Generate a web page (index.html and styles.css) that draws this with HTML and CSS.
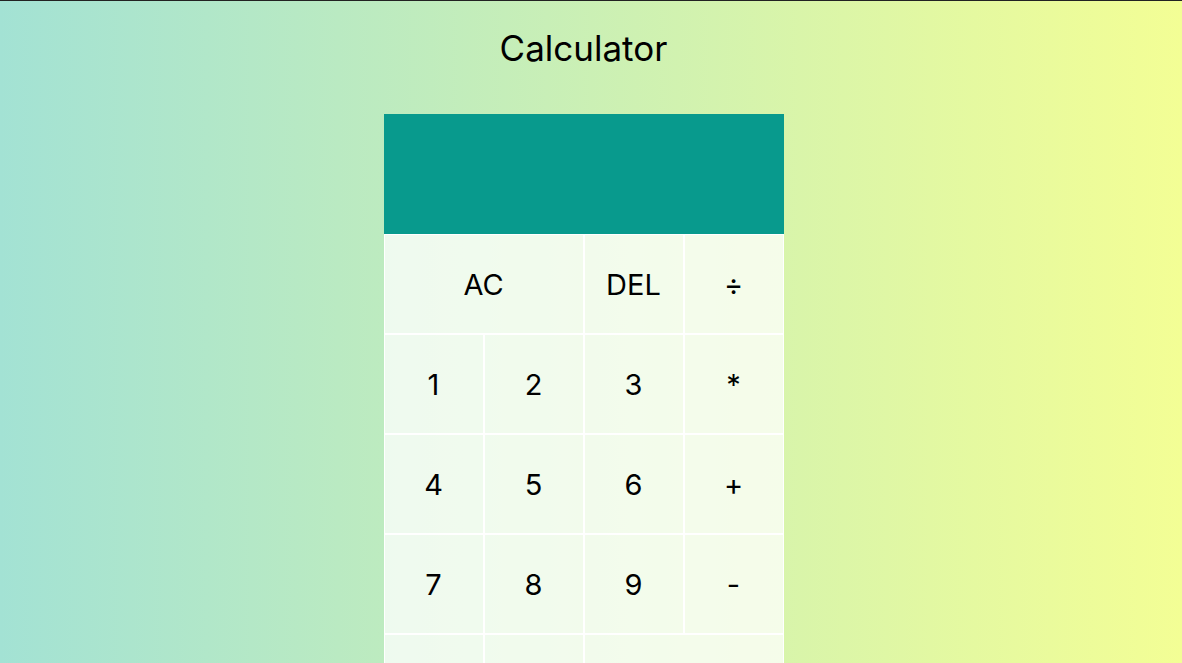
FILE: index.html
```html
<!DOCTYPE html>
<html lang="en">
<head>
<meta charset="utf-8">
<title>Calculator</title>
<link rel="stylesheet" href="styles.css">
</head>
<body>
<h1 class="title">Calculator</h1>
<div class="calculator-grid">
  <div class="output"></div>
  <button class="span-two">AC</button>
  <button>DEL</button>
  <button>÷</button>
  <button>1</button>
  <button>2</button>
  <button>3</button>
  <button>*</button>
  <button>4</button>
  <button>5</button>
  <button>6</button>
  <button>+</button>
  <button>7</button>
  <button>8</button>
  <button>9</button>
  <button>-</button>
  <button>.</button>
  <button>0</button>
  <button class="span-two">=</button>
</div>
</body>
</html>
```
FILE: styles.css
```css
*, *::before, *::after {
  box-sizing: border-box;
}
html, body {
  margin: 0;
  padding: 0;
}
body {
  min-height: 100vh;
  padding-right: 15px;
  border-top: 1px solid #222;
  background: linear-gradient(to right, #a3e2d4, #f3fe95);
  font-family: "Inter", "Lato", sans-serif;
  color: #000;
}
.title {
  margin: 0;
  padding-top: 27px;
  height: 113px;
  text-align: center;
  font-size: 35px;
  font-weight: 400;
  line-height: 40px;
}
.calculator-grid {
  display: grid;
  justify-content: center;
  grid-template-columns: repeat(4, 100px);
  grid-template-rows: 120px repeat(5, 100px);
}
.output {
  grid-column: 1 / -1;
  background-color: #089a8d;
}
.calculator-grid > button {
  font-family: inherit;
  font-size: 29px;
  color: #000;
  border: 1px solid #fff;
  outline: none;
  background-color: rgba(255, 255, 255, 0.75);
  padding: 0;
}
.span-two {
  grid-column: span 2;
}
```
